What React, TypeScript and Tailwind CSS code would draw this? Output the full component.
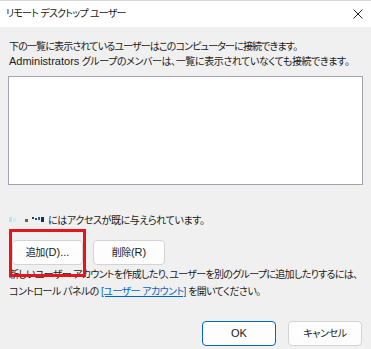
import React from "react";

const font = {
  fontFamily: '"Liberation Sans", "Noto Sans CJK JP", sans-serif',
  fontFeatureSettings: '"palt"',
} as React.CSSProperties;

const Lat = ({ children }: { children: React.ReactNode }) => (
  <span className="text-[11px] tracking-[0px]">{children}</span>
);

export default function App() {
  return (
    <div
      className="relative w-[371px] h-[349px] bg-[#f0f0f0] text-[10px] tracking-[-0.75px] text-[#1a1a1a] overflow-hidden"
      style={font}
    >
      <div className="h-[27px] bg-white flex items-center justify-between pl-[6px] pr-[8px] border-t border-[#d8d8d8]">
        <span className="leading-none">リモート デスクトップ ユーザー</span>
        <svg width="10" height="10" viewBox="0 0 10 10" className="text-[#222]">
          <path d="M0.5 0.5L9.5 9.5M9.5 0.5L0.5 9.5" stroke="currentColor" strokeWidth="1" />
        </svg>
      </div>
      <div className="px-[9px] pt-[12px] flex flex-col">
        <div className="leading-[15px] whitespace-nowrap">
          <div className="tracking-[-0.85px]">下の一覧に表示されているユーザーはこのコンピューターに接続できます。</div>
          <div className="tracking-[-0.4px]">
            <Lat>Administrators</Lat> グループのメンバーは、一覧に表示されていなくても接続できます。
          </div>
        </div>
        <div className="mt-[7px] -ml-[1px] w-[355px] h-[109px] bg-white border border-[#a0a4ac]" />
        <div className="mt-[27px] h-[16px] flex items-center tracking-[-0.4px]">
          <span className="relative w-[39px] h-[16px] shrink-0">
            <span className="absolute left-[0px] top-[5px] w-[3px] h-[5px] bg-[#b8e2f4]" />
            <span className="absolute left-[4px] top-[6px] w-[3px] h-[4px] bg-[#cdeef9]" />
            <span className="absolute left-[11px] top-[7px] w-[3px] h-[3px] bg-[#e0f4fa]" />
            <span className="absolute left-[16px] top-[7px] w-[3px] h-[3px] bg-[#a0521e]" />
            <span className="absolute left-[23px] top-[5px] w-[2px] h-[2px] bg-[#23346e]" />
            <span className="absolute left-[26px] top-[6px] w-[2px] h-[2px] bg-[#2e4888]" />
            <span className="absolute left-[29px] top-[5px] w-[2px] h-[3px] bg-[#3a58a0]" />
            <span className="absolute left-[32px] top-[5px] w-[3px] h-[5px] bg-[#1c2c5c]" />
          </span>
          <span>にはアクセスが既に与えられています。</span>
        </div>
        <div className="mt-[12px] flex gap-[10px] pl-[3px] tracking-[-0.4px]">
          <button className="w-[71px] h-[25px] bg-[#fdfdfd] border border-[#d3d3d3] rounded-[4px]">
            追加<Lat>(D)...</Lat>
          </button>
          <button className="w-[72px] h-[25px] bg-[#fdfdfd] border border-[#d3d3d3] rounded-[4px]">
            削除<Lat>(R)</Lat>
          </button>
        </div>
        <div className="mt-[1px] leading-[17px] whitespace-nowrap">
          <div className="tracking-[-0.68px]">新しいユーザー アカウントを作成したり、ユーザーを別のグループに追加したりするには、</div>
          <div className="tracking-[-0.55px]">
            コントロール パネルの <span className="text-[#0067c0] underline">[ユーザー アカウント]</span> を開いてください。
          </div>
        </div>
        <div className="mt-[21px] flex justify-end gap-[12px] tracking-[-0.4px]">
          <button className="w-[74px] h-[25px] bg-[#fdfdfd] border border-[#0067c0] rounded-[4px]">
            <Lat>OK</Lat>
          </button>
          <button className="w-[74px] h-[25px] bg-[#fdfdfd] border border-[#d3d3d3] rounded-[4px]">キャンセル</button>
        </div>
      </div>
      <div className="absolute left-[9px] top-[229px] w-[77px] h-[48px] border-[3px] border-[#e8141c]" />
    </div>
  );
}
